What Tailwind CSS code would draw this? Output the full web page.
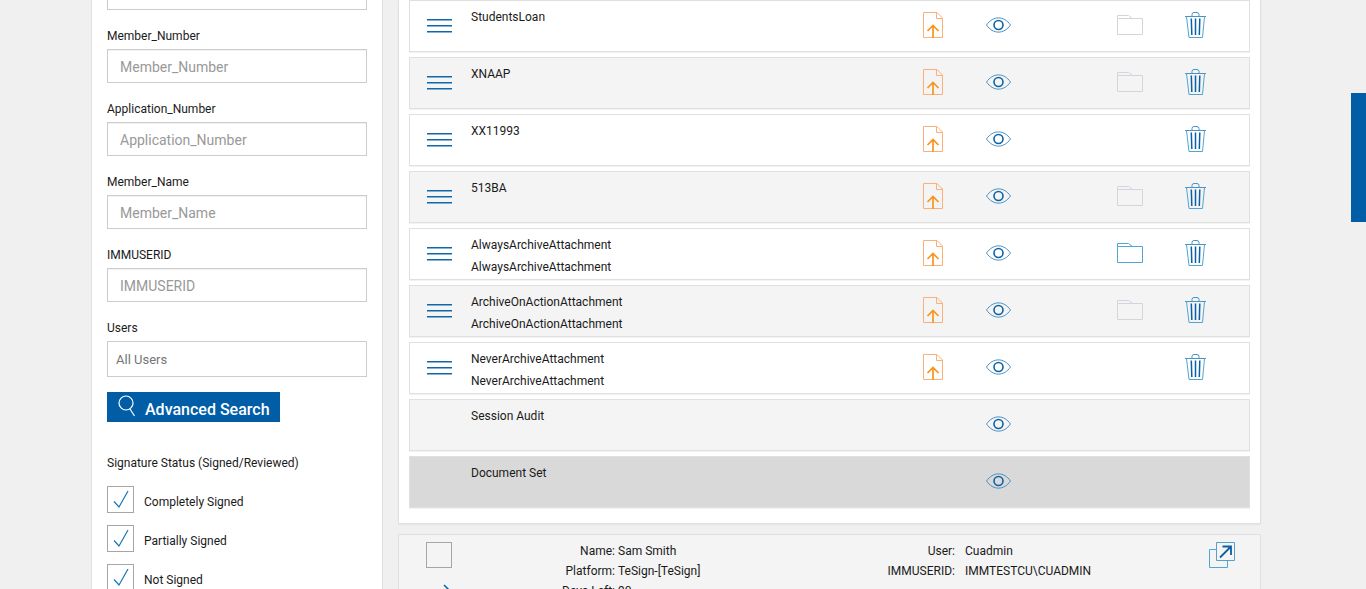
<!DOCTYPE html>
<html lang="en">
<head>
    <meta charset="UTF-8">
    <meta name="viewport" content="width=device-width, initial-scale=1">
    <title>Sessions</title>
    <script src="https://cdn.jsdelivr.net/npm/@tailwindcss/browser@4"></script>
</head>
<body class="h-screen overflow-hidden bg-[#f0f0f0] pr-3.5 font-[Roboto,sans-serif] text-xs leading-5 text-[#1a1a1a]">
    <!-- Icon set -->
    <svg class="hidden">
        <symbol id="icon-handle" viewBox="0 0 25 28">
            <path d="M0 7.8h25M0 13.8h25M0 19.8h25" fill="none" stroke="#0f68aa" stroke-width="1.6"/>
        </symbol>
        <symbol id="icon-upload" viewBox="0 0 28 28">
            <path d="M4.5 .5H18L23.5 6V25.5H4.5ZM17.5 .5V6.5H23.5" fill="none" stroke="#fbb07a"/>
            <path d="M14 26V14M8.5 19L14 13.5L19.5 19" fill="none" stroke="#f7941d" stroke-width="1.7"/>
        </symbol>
        <symbol id="icon-eye" viewBox="0 0 28 28">
            <path d="M2.5 13C9 3.5 20 3.5 26.5 13C20 22.5 9 22.5 2.5 13Z" fill="none" stroke="#4a8fc0"/>
            <circle cx="14.5" cy="13" r="4.5" fill="none" stroke="#0b63a8" stroke-width="1.6"/>
        </symbol>
        <symbol id="icon-folder" viewBox="0 0 28 28">
            <path d="M1.5 6.5V3.5H12.5L16.5 6.5M1.5 6.5H26.5V22.5H1.5Z" fill="none" stroke="currentColor"/>
        </symbol>
        <symbol id="icon-trash" viewBox="0 0 28 28">
            <path d="M4 4.5H25M11 4.5V2.5Q11 .5 13 .5H16Q18 .5 18 2.5V4.5" fill="none" stroke="#4a94c4"/>
            <path d="M5.5 4.5L8 25.5H21.5L23.5 4.5" fill="none" stroke="#4fa6d2"/>
            <path d="M10.3 6.5L10.8 23M14.5 6.5V23M18.8 6.5L18.3 23" fill="none" stroke="#0b5fa5" stroke-width="1.5"/>
        </symbol>
    </svg>

    <div class="mx-auto flex max-w-[1170px] items-start gap-[15px]">
        <!-- Search filters -->
        <aside class="min-h-screen w-[292px] shrink-0 border-x border-[#e0e0e0] bg-white px-[15px]">
            <form>
                <input type="text" aria-label="Search value" class="-mt-6 mb-4 block h-[34px] w-full border border-[#ccc] px-3 text-sm">
                <div id="fields"></div>
                <label for="users" class="mb-[3px] block">Users</label>
                <input id="users" type="text" placeholder="All Users" class="mb-[15px] block h-9 w-full border border-[#ccc] px-2 text-[13px] placeholder:text-[#757575]">
                <button type="button" class="flex h-[30px] items-center bg-[#005da6] px-2.5 text-base font-medium text-white">
                    <svg class="mr-2 h-[30px] w-5" viewBox="0 0 20 30" fill="none" stroke="#fff" stroke-width="1.2">
                        <circle cx="9" cy="11" r="7"/>
                        <path d="M13 17L17.5 24"/>
                    </svg>
                    <span class="pt-1.5">Advanced Search</span>
                </button>
                <fieldset class="mt-[31px]">
                    <legend class="mb-[13px]">Signature Status (Signed/Reviewed)</legend>
                    <div id="statuses" class="space-y-3"></div>
                </fieldset>
            </form>
        </aside>

        <main class="min-w-0 flex-1">
            <section class="border border-t-0 border-[#e0e0e0] bg-white px-2.5 pb-[15px] shadow-xs">
                <ul id="documents" class="space-y-[5px]"></ul>
            </section>

            <!-- Next session -->
            <section class="mt-2.5 flex border border-[#e0e0e0] bg-[#f4f4f4] pt-1.5 pr-6 pl-[27px]">
                <div class="w-[27px] pt-px">
                    <input type="checkbox" aria-label="Select session" class="block size-[26px] appearance-none border border-[#a6a6a6]">
                    <button type="button" aria-label="Expand session" class="mt-4 ml-3">
                        <svg class="h-5 w-4" viewBox="0 0 16 20" fill="none" stroke="#0b6bb0" stroke-width="1.6"><path d="M6 1L12 7L6 13"/></svg>
                    </button>
                </div>
                <dl class="grid flex-1 grid-cols-[162px_1fr_72px_254px] content-start">
                    <dt class="text-right">Name:</dt><dd class="pl-[3px]">Sam Smith</dd>
                    <dt class="text-right">User:</dt><dd class="pl-2.5">Cuadmin</dd>
                    <dt class="text-right">Platform:</dt><dd class="pl-[3px]">TeSign-[TeSign]</dd>
                    <dt class="text-right">IMMUSERID:</dt><dd class="pl-2.5">IMMTESTCU\CUADMIN</dd>
                    <dt class="text-right">Days Left:</dt><dd class="pl-[3px]">90</dd>
                </dl>
                <a href="#" aria-label="Open session" class="pt-px">
                    <svg class="size-[27px]" viewBox="0 0 27 27" fill="none">
                        <path d="M7.5 7.5H.5V25.5H18.5V18.5" stroke="#4fa6d2"/>
                        <path d="M7.5 .5H25.5V18.5H7.5Z" stroke="#5a9fc8"/>
                        <path d="M11 15.5L22 4.5M13.5 4.5H22V13" stroke="#0b5fa5" stroke-width="1.8"/>
                    </svg>
                </a>
            </section>
        </main>
    </div>

    <button type="button" aria-label="Open panel" class="fixed top-[93px] right-0 h-[129px] w-[15px] bg-[#005da6]"></button>

    <script>
        const fields = ['Member_Number', 'Application_Number', 'Member_Name', 'IMMUSERID'];
        const statuses = ['Completely Signed', 'Partially Signed', 'Not Signed'];

        // folder: 'on' = active, 'off' = disabled, missing = not shown
        const documents = [
            { lines: ['StudentsLoan'], folder: 'off' },
            { lines: ['XNAAP'], folder: 'off' },
            { lines: ['XX11993'] },
            { lines: ['513BA'], folder: 'off' },
            { lines: ['AlwaysArchiveAttachment', 'AlwaysArchiveAttachment'], folder: 'on' },
            { lines: ['ArchiveOnActionAttachment', 'ArchiveOnActionAttachment'], folder: 'off' },
            { lines: ['NeverArchiveAttachment', 'NeverArchiveAttachment'] },
            { lines: ['Session Audit'], viewOnly: true },
            { lines: ['Document Set'], viewOnly: true, bg: 'bg-[#d9d9d9]' }
        ];

        document.getElementById('fields').innerHTML = fields.map(name => `
            <label for="${name}" class="mb-[3px] block">${name}</label>
            <input id="${name}" type="text" placeholder="${name}" class="mb-4 block h-[34px] w-full border border-[#ccc] px-3 pt-0.5 text-sm inset-shadow-2xs placeholder:text-[#999]">
        `).join('');

        document.getElementById('statuses').innerHTML = statuses.map(name => `
            <label class="flex items-center">
                <span class="relative mr-2.5 size-[27px]">
                    <input type="checkbox" checked class="peer block size-[27px] appearance-none border border-[#a6a6a6]">
                    <svg class="pointer-events-none absolute inset-0 hidden size-[27px] peer-checked:block" viewBox="0 0 27 27" fill="none" stroke="#1a75b5" stroke-width="1.2"><path d="M7 15.5L12 21L21 5"/></svg>
                </span>
                <span class="pt-1">${name}</span>
            </label>
        `).join('');

        function iconButton(icon, label, extra = '') {
            return `<button type="button" aria-label="${label}" ${extra}><svg class="size-7"><use href="#icon-${icon}"/></svg></button>`;
        }

        document.getElementById('documents').innerHTML = documents.map((doc, i) => `
            <li class="flex h-[52px] items-center border border-[#e0e0e0] pr-[21px] shadow-2xs ${doc.bg || (i % 2 ? 'bg-[#f4f4f4]' : 'bg-white')}">
                <div class="w-[61px] pl-[17px]">
                    ${doc.viewOnly ? '' : '<button type="button" aria-label="Reorder" class="block"><svg class="h-7 w-[25px]"><use href="#icon-handle"/></svg></button>'}
                </div>
                <div class="flex-1 self-start pt-[5px] leading-[22px]">
                    ${doc.lines.map(line => `<p>${line}</p>`).join('')}
                </div>
                <div class="grid w-[328px] grid-cols-5 justify-items-center">
                    <span class="flex">${doc.viewOnly ? '' : iconButton('upload', 'Upload')}</span>
                    <span class="flex">${iconButton('eye', 'View')}</span>
                    <span></span>
                    <span class="flex">${doc.folder ? iconButton('folder', 'Archive', doc.folder === 'on' ? 'class="text-[#4fa6d2]"' : 'disabled class="text-[#d4d4dc]"') : ''}</span>
                    <span class="flex">${doc.viewOnly ? '' : iconButton('trash', 'Delete')}</span>
                </div>
            </li>
        `).join('');
    </script>
</body>
</html>
